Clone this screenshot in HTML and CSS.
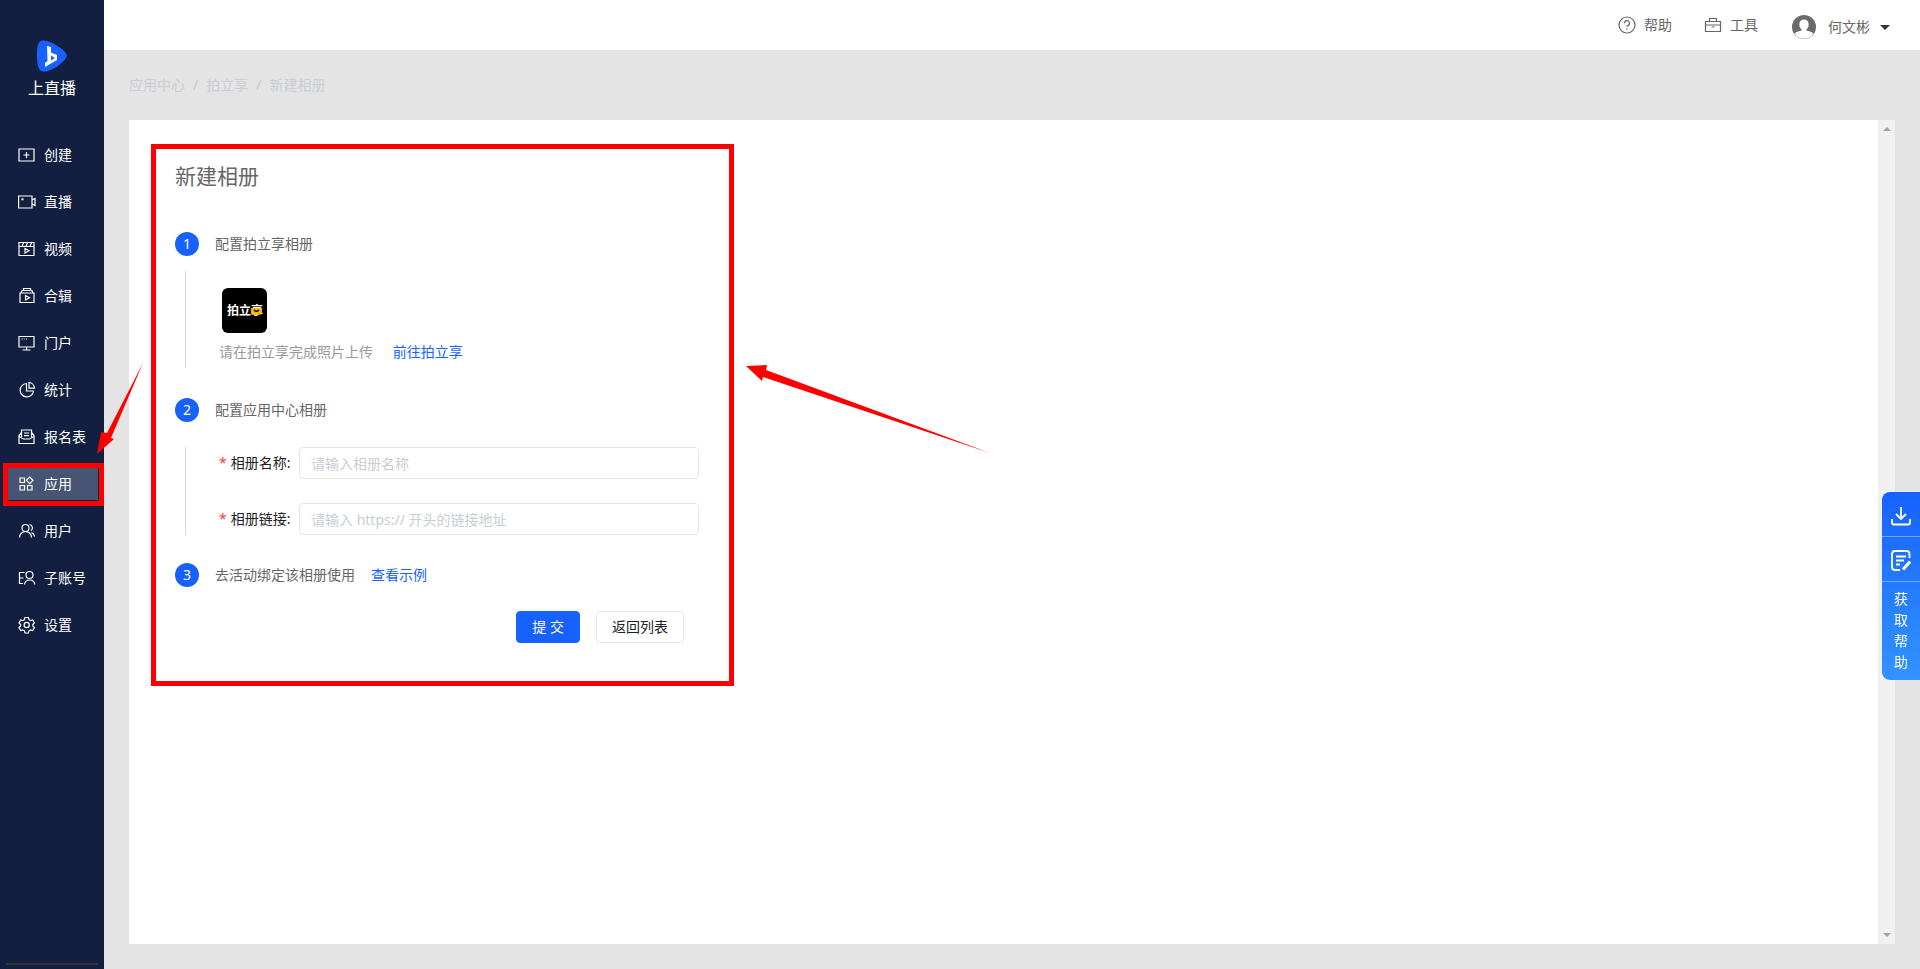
FILE: index.html
```html
<!DOCTYPE html>
<html lang="zh-CN">
<head>
    <meta charset="UTF-8">
    <meta name="viewport" content="width=device-width, initial-scale=1.0">
    <title>新建相册</title>
    <link rel="stylesheet" href="styles.css">
</head>
<body>
    <div class="app">
        <aside class="sidebar">
            <div class="logo">
                <svg width="30" height="32" viewBox="0 0 30 32">
                    <path d="M0 16C0 9 .5 5 2 2.500C3.500 0 7 0 10 1C16 3 22 6.500 27 11C30.500 14 30.500 17 27 20.500C22 25.500 17 29 11 31C7 32 4 32 2 28.500C.5 25 0 22 0 16Z" fill="#1761ff"/>
                    <path d="M10 6l4 1v5.500l6 2.500v5L8 27v-4l2.500-2zM14 15.500v5l4-2.500z" fill="#fff" fill-rule="evenodd"/>
                </svg>
                <span>上直播</span>
            </div>

            <nav class="menu">
                <a class="menu-item" href="#">
                    <svg class="icon" viewBox="0 0 18 18"><path d="M1 3h15v12H1zM8.500 6v6M5.500 9h6"/></svg>
                    <span>创建</span>
                </a>
                <a class="menu-item" href="#">
                    <svg class="icon" viewBox="0 0 18 18"><path d="M.6 3H14v12H.6zM14 7l3-1.500v7L14 11"/><path d="M3.500 6.300h2" stroke-width="2"/></svg>
                    <span>直播</span>
                </a>
                <a class="menu-item" href="#">
                    <svg class="icon" viewBox="0 0 18 18"><path d="M1 2.500h15v13H1zM1 6.500h15M4 6l1.500-3M8 6l1.500-3M12 6l1.500-3M7 8.500v4.500l4-2.200z"/></svg>
                    <span>视频</span>
                </a>
                <a class="menu-item" href="#">
                    <svg class="icon" viewBox="0 0 18 18"><path d="M2 6h14v9.500H2zM3 6l1-2.500h10L15 6M5.500 3.500V1.500h7v2M7.500 8.500v4.500l4-2.200z"/></svg>
                    <span>合辑</span>
                </a>
                <a class="menu-item" href="#">
                    <svg class="icon" viewBox="0 0 18 18"><path d="M1 2.500h15v10.500H1zM8.500 13v3M4.500 16h8M3.500 5h1M5.700 5h1M8 5h1"/></svg>
                    <span>门户</span>
                </a>
                <a class="menu-item" href="#">
                    <svg class="icon" viewBox="0 0 18 18"><path d="M8.500 2.500A6.700 6.700 0 1 0 15.500 10H8.500zM11 1.500v5.700h5.500A6 6 0 0 0 11 1.500z"/></svg>
                    <span>统计</span>
                </a>
                <a class="menu-item" href="#">
                    <svg class="icon" viewBox="0 0 18 18"><path d="M3.500 9V2h10v7M1 7v8.500h15V7M1 8.500l4.500 2.500h6l4.500-2.500M1 7.500l2.500-3M16 7.500l-2.500-3M6 5h5M6 7.700h5"/></svg>
                    <span>报名表</span>
                </a>
                <a class="menu-item active" href="#">
                    <svg class="icon" viewBox="0 0 18 18"><path d="M2 3h4.500v4.500H2zM2 10.500h4.500V15H2zM9.500 10.500H14V15H9.500zM11.700 2l3.300 3.300-3.300 3.300-3.300-3.300z"/></svg>
                    <span>应用</span>
                    <i class="mark"></i>
                </a>
                <a class="menu-item" href="#">
                    <svg class="icon" viewBox="0 0 18 18"><circle cx="7.500" cy="6" r="3.500"/><path d="M1.500 15.500a6 6 0 0 1 12 0M11.500 2.500a3.500 3.500 0 0 1 1.500 6.300M13.500 10.500a5 5 0 0 1 3 4"/></svg>
                    <span>用户</span>
                </a>
                <a class="menu-item" href="#">
                    <svg class="icon" viewBox="0 0 18 18"><circle cx="11.500" cy="6" r="3.500"/><path d="M6.500 15.500a5.200 5.200 0 0 1 10.300 0M6.500 3.500H1.500v11h3.500M1.500 9h4"/></svg>
                    <span>子账号</span>
                </a>
                <a class="menu-item" href="#">
                    <svg class="icon" viewBox="0 0 18 18"><circle cx="8.700" cy="9" r="2.600"/><path d="M7 1.500h3.400l.6 2.200 1.500.9 2.200-.6 1.700 2.900-1.600 1.600v1.500l1.600 1.600-1.700 2.900-2.200-.6-1.500.9-.6 2.200H7l-.6-2.200-1.500-.9-2.200.6L1 11.600 2.600 10V8.500L1 6.900 2.700 4l2.200.6 1.500-.9z"/></svg>
                    <span>设置</span>
                </a>
            </nav>
            <div class="sidebar-line"></div>
        </aside>

        <div class="content">
            <header class="header">
                <a class="header-link" href="#">
                    <svg class="icon" viewBox="0 0 18 18"><circle cx="9" cy="9" r="8"/><path d="M6.500 7.200a2.500 2.500 0 1 1 3.600 2.200c-.8.400-1.100.8-1.100 1.600M9 12.300v1.300"/></svg>
                    <span>帮助</span>
                </a>
                <a class="header-link" href="#">
                    <svg class="icon" viewBox="0 0 18 18"><path d="M1.500 5.500h15v10h-15zM5.500 5.500v-3h7v3M1.500 9h15M7.500 11h3"/></svg>
                    <span>工具</span>
                </a>
                <button class="user" type="button">
                    <svg width="24" height="24" viewBox="0 0 24 24">
                        <circle cx="12" cy="12" r="12" fill="#6b6b6b"/>
                        <path d="M12 4.500c3 0 4.700 2 4.700 5 0 2.500-1 4-2.500 5.200v.8c3 .5 6 1.500 7.300 3.200A11.400 11.400 0 0 1 2.500 18.700c1.300-1.700 4.300-2.700 7.300-3.200v-.8C8.300 13.500 7.300 12 7.300 9.500c0-3 1.700-5 4.700-5z" fill="#fff"/>
                    </svg>
                    <span>何文彬</span>
                    <i class="caret"></i>
                </button>
            </header>

            <div class="breadcrumb">
                <a href="#">应用中心</a><span>/</span><a href="#">拍立享</a><span>/</span><a href="#">新建相册</a>
            </div>

            <main class="card">
                <form class="album-form">
                    <h1>新建相册</h1>

                    <div class="step">
                        <span class="num">1</span>
                        <span>配置拍立享相册</span>
                    </div>
                    <div class="step-body upload">
                        <svg class="app-logo" width="45" height="45" viewBox="0 0 45 45">
                            <rect width="45" height="45" rx="6" fill="#000"/>
                            <text x="5" y="27">拍立享</text>
                            <path d="M29 20h11v5q-1 2-3 2h-5q-3 0-3-2z" fill="#f6b511"/>
                            <path d="M32 22q2.500 2.500 5 0" fill="none" stroke="#000" stroke-width="1.500"/>
                        </svg>
                        <p>请在拍立享完成照片上传 <a href="#">前往拍立享</a></p>
                    </div>

                    <div class="step">
                        <span class="num">2</span>
                        <span>配置应用中心相册</span>
                    </div>
                    <div class="step-body fields">
                        <div class="field">
                            <label for="albumName"><b>*</b>相册名称:</label>
                            <input type="text" id="albumName" placeholder="请输入相册名称">
                        </div>
                        <div class="field">
                            <label for="albumLink"><b>*</b>相册链接:</label>
                            <input type="text" id="albumLink" placeholder="请输入 https:// 开头的链接地址">
                        </div>
                    </div>

                    <div class="step">
                        <span class="num">3</span>
                        <span>去活动绑定该相册使用</span>
                        <a href="#">查看示例</a>
                    </div>

                    <div class="buttons">
                        <button class="btn primary" type="button">提 交</button>
                        <button class="btn" type="button">返回列表</button>
                    </div>
                    <i class="mark"></i>
                </form>

                <div class="scrollbar">
                    <i class="up"></i>
                    <i class="down"></i>
                </div>
            </main>
        </div>
    </div>

    <!-- 右侧悬浮工具 -->
    <div class="float-tools">
        <button type="button" aria-label="下载">
            <svg width="20" height="20" viewBox="0 0 20 20"><path d="M10 1v12M5 8l5 5 5-5M1 13v3.500q0 2 2 2h14q2 0 2-2V13"/></svg>
        </button>
        <button type="button" aria-label="反馈">
            <svg width="20" height="22" viewBox="0 0 20 22"><path d="M18.500 8V4q0-3-3-3H4Q1 1 1 4v13q0 3 3 3h5M5 6.500h10M5 10.500h8M5 14.500h4"/><path d="M12 19.500l7-8" stroke-width="3"/></svg>
        </button>
        <button class="help-text" type="button">获取帮助</button>
    </div>

    <!-- 指示箭头 -->
    <svg class="arrows" width="1000" height="460" viewBox="0 0 1000 460">
        <path d="M97 454L101 432L107 433L143 363L111 438L114 439Z"/>
        <path d="M746 366L767 365L766 370L990 453L763 377L762 381Z"/>
    </svg>
</body>
</html>
```
FILE: styles.css
```css
* {
    box-sizing: border-box;
}

body {
    margin: 0;
    font-family: "Noto Sans", "Noto Sans CJK SC", sans-serif;
    font-size: 14px;
    line-height: 22px;
    color: #666;
    background-color: #e4e4e4;
}

a {
    color: #1761ff;
    text-decoration: none;
}

button, input {
    font: inherit;
}

.icon {
    width: 18px;
    height: 18px;
    fill: none;
    stroke: currentColor;
    stroke-width: 1.2;
}

.app {
    display: flex;
    min-height: 100vh;
}

/* 左侧菜单 */
.sidebar {
    display: flex;
    flex-direction: column;
    flex: none;
    width: 104px;
    padding: 40px 6px 4px;
    background-color: #121f41;
}

.logo {
    display: flex;
    flex-direction: column;
    align-items: center;
    gap: 5px;
    margin-bottom: 40px;
    color: #fff;
    font-size: 16px;
}

.menu {
    display: flex;
    flex-direction: column;
    gap: 15px;
}

.menu-item {
    position: relative;
    display: flex;
    align-items: center;
    gap: 8px;
    height: 32px;
    padding-left: 12px;
    color: #fff;
}

.menu-item.active {
    background-color: #475474;
}

.sidebar-line {
    height: 2px;
    margin-top: auto;
    background-color: #333;
}

.mark {
    position: absolute;
    border: 5px solid #f00;
    pointer-events: none;
}

.menu-item .mark {
    inset: -5px -6px -6px -3px;
}

/* 右侧内容 */
.content {
    display: flex;
    flex-direction: column;
    flex: 1;
    padding-bottom: 25px;
}

.header {
    display: flex;
    justify-content: flex-end;
    align-items: center;
    gap: 32px;
    height: 50px;
    padding-right: 30px;
    background-color: #fff;
}

.header-link {
    display: flex;
    align-items: center;
    gap: 8px;
    color: #666;
}

.user {
    display: flex;
    align-items: center;
    gap: 10px;
    padding: 4px 0 0 2px;
    border: none;
    background: none;
    color: #666;
}

.user svg {
    margin-right: 2px;
}

.caret {
    border: 5px solid transparent;
    border-top-color: #333;
    border-bottom: none;
}

.breadcrumb {
    display: flex;
    gap: 8px;
    padding: 24px 25px;
    color: #c5cad5;
}

.breadcrumb a {
    color: #c9cdd4;
}

.card {
    display: flex;
    justify-content: space-between;
    flex: 1;
    margin: 0 25px;
    background-color: #fff;
}

.scrollbar {
    display: flex;
    flex-direction: column;
    justify-content: space-between;
    align-items: center;
    width: 17px;
    padding: 7px 0;
    background-color: #f0f0f0;
}

.up, .down {
    border: 4px solid transparent;
}

.up {
    border-top: none;
    border-bottom-color: #a3a3a3;
}

.down {
    border-bottom: none;
    border-top-color: #a3a3a3;
}

/* 表单 */
.album-form {
    position: relative;
    width: 583px;
    margin: 24px 22px auto;
    padding: 16px 24px 43px;
}

.album-form > .mark {
    inset: 0;
}

h1 {
    margin: 0 0 40px;
    font-size: 21px;
    font-weight: 400;
    line-height: 32px;
}

.step {
    display: flex;
    align-items: center;
    gap: 16px;
    height: 24px;
}

.num {
    width: 24px;
    border-radius: 50%;
    background-color: #1761ff;
    color: #fff;
    line-height: 24px;
    text-align: center;
}

.step-body {
    margin-left: 10px;
    padding-left: 33px;
    border-left: 1px solid #d9d9d9;
}

.upload {
    height: 97px;
    margin-top: 15px;
    margin-bottom: 30px;
    padding-top: 17px;
}

.app-logo {
    display: block;
    margin-left: 3px;
}

.app-logo text {
    fill: #fff;
    font-size: 12px;
    font-weight: 700;
}

.upload p {
    margin: 8px 0 0;
    color: #999;
}

.upload a {
    margin-left: 16px;
}

.fields {
    display: flex;
    flex-direction: column;
    gap: 24px;
    margin-top: 25px;
    margin-bottom: 28px;
}

.field {
    display: flex;
    align-items: center;
    gap: 8px;
}

.field label {
    width: 72px;
    color: #1d2129;
    white-space: nowrap;
}

.field b {
    margin-right: 4px;
    color: #f53f3f;
    font-weight: 400;
}

.field input {
    width: 400px;
    height: 32px;
    padding: 0 11px;
    border: 1px solid #e5e6eb;
    border-radius: 4px;
    color: #1d2129;
}

.field input::placeholder {
    color: #c9cdd4;
}

.buttons {
    display: flex;
    justify-content: flex-end;
    gap: 16px;
    margin-top: 24px;
    padding-right: 26px;
}

.btn {
    height: 32px;
    padding: 0 15px;
    border: 1px solid #e5e6eb;
    border-radius: 4px;
    background-color: #fff;
    color: #1d2129;
    cursor: pointer;
}

.btn.primary {
    border-color: #1761ff;
    background-color: #1761ff;
    color: #fff;
}

/* 悬浮工具 */
.float-tools {
    position: fixed;
    top: 492px;
    right: 0;
    display: flex;
    flex-direction: column;
    width: 38px;
    border-radius: 8px 0 0 8px;
    background-image: linear-gradient(#1761ff, #3294ff);
}

.float-tools button {
    display: flex;
    justify-content: center;
    align-items: center;
    height: 45px;
    padding: 4px 0 0;
    border: none;
    border-bottom: 1px solid #74a5ff;
    background: none;
    color: #fff;
}

.float-tools svg {
    fill: none;
    stroke: #fff;
    stroke-width: 1.8;
}

.float-tools .help-text {
    height: 98px;
    padding: 0 12px 2px;
    border: none;
    line-height: 21px;
}

.arrows {
    position: absolute;
    top: 0;
    left: 0;
    fill: #f00;
    pointer-events: none;
}
```
